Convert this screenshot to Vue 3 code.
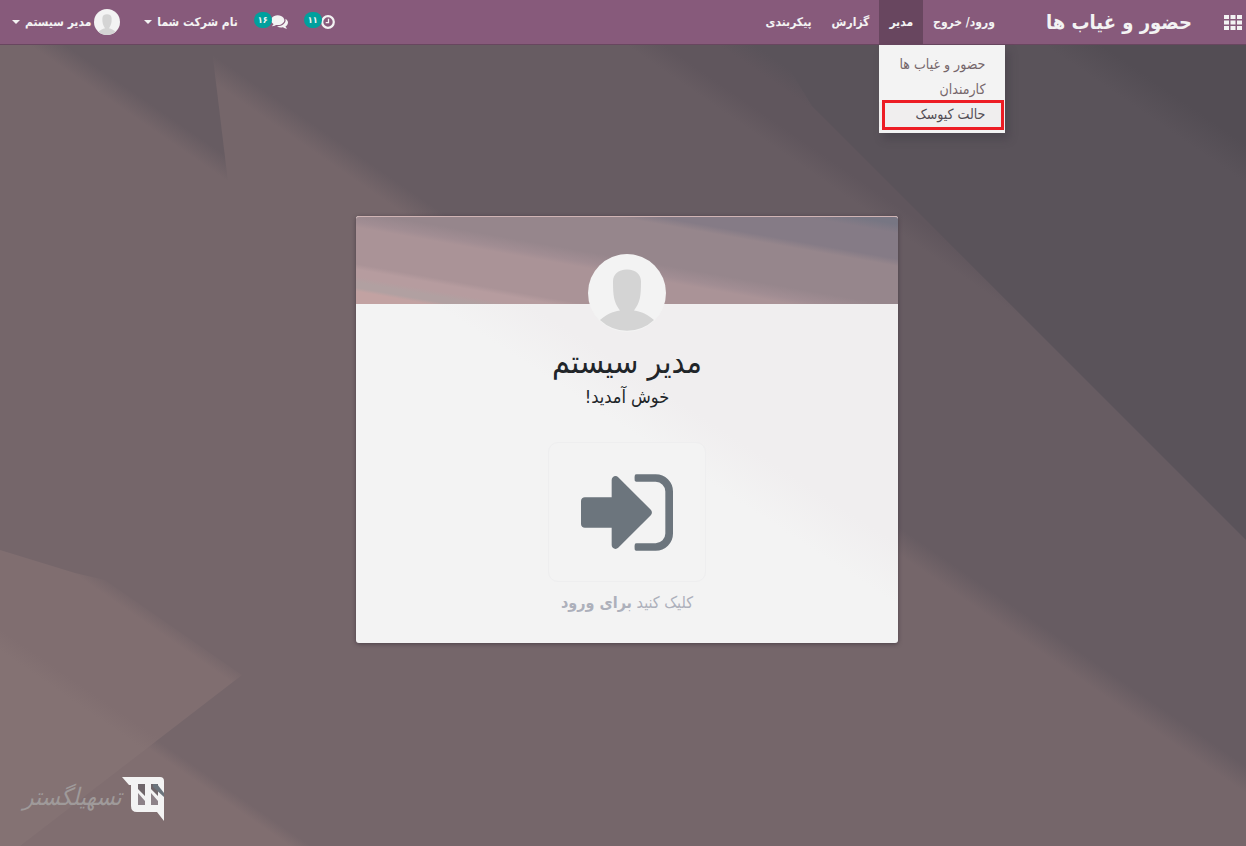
<script setup>
import { ref } from 'vue'

const menus = ref([
    { label: 'ورود/ خروج' },
    {
        label: 'مدیر',
        open: true,
        items: [
            { label: 'حضور و غیاب ها' },
            { label: 'کارمندان' },
            { label: 'حالت کیوسک', marked: true },
        ],
    },
    { label: 'گزارش' },
    { label: 'پیکربندی' },
])

const checkedIn = ref(false)

function toggleMenu(menu) {
    if (menu.items) menu.open = !menu.open
}
</script>

<template>
    <div class="page" dir="rtl" lang="fa">
        <!-- all facets share one gradient axis, only the stops differ -->
        <svg class="backdrop" viewBox="0 0 1246 846" preserveAspectRatio="none" aria-hidden="true">
            <defs>
                <linearGradient id="base" gradientUnits="userSpaceOnUse" x1="-340" y1="494" x2="340" y2="-494">
                    <stop offset="0.056" stop-color="#806e70" />
                    <stop offset="0.066" stop-color="#75666a" />
                    <stop offset="0.544" stop-color="#75666a" />
                    <stop offset="0.563" stop-color="#675c62" />
                    <stop offset="0.765" stop-color="#675c62" />
                    <stop offset="0.783" stop-color="#60565d" />
                    <stop offset="0.809" stop-color="#60565d" />
                    <stop offset="0.826" stop-color="#5a535a" />
                </linearGradient>
                <linearGradient id="left" gradientUnits="userSpaceOnUse" x1="-340" y1="494" x2="340" y2="-494">
                    <stop offset="0.483" stop-color="#75666a" />
                    <stop offset="0.5" stop-color="#675c62" />
                </linearGradient>
                <linearGradient id="right" gradientUnits="userSpaceOnUse" x1="-340" y1="494" x2="340" y2="-494">
                    <stop offset="0.963" stop-color="#5a535a" />
                    <stop offset="0.99" stop-color="#534d54" />
                </linearGradient>
                <linearGradient id="corner" gradientUnits="userSpaceOnUse" x1="-340" y1="494" x2="340" y2="-494">
                    <stop offset="0.053" stop-color="#847273" />
                    <stop offset="0.068" stop-color="#806e70" />
                    <stop offset="0.141" stop-color="#806e70" />
                    <stop offset="0.153" stop-color="#75666a" />
                </linearGradient>
            </defs>
            <rect width="1246" height="846" fill="url(#base)" />
            <path d="M0 0H206L228 182L0 400Z" fill="url(#left)" />
            <path d="M790 0H1246V540L812 106L790 70Z" fill="url(#right)" />
            <path d="M0 550L75 573L105 580L242 675L20 846H0Z" fill="url(#corner)" />
        </svg>

        <header class="navbar">
            <button class="apps" type="button" aria-label="برنامه ها">
                <svg width="18" height="15" viewBox="0 0 18 15" fill="currentColor">
                    <path d="M0 0h5v4H0zM6.500 0h5v4h-5zM13 0h5v4h-5zM0 5.500h5v4H0zM6.500 5.500h5v4h-5zM13 5.500h5v4h-5zM0 11h5v4H0zM6.500 11h5v4h-5zM13 11h5v4h-5z" />
                </svg>
            </button>
            <a class="brand" href="#">حضور و غیاب ها</a>

            <nav class="menus">
                <div v-for="menu in menus" :key="menu.label" class="menu">
                    <button class="menu-toggle" :class="{ open: menu.open }" type="button" @click="toggleMenu(menu)">{{ menu.label }}</button>
                    <div v-if="menu.open" class="dropdown">
                        <a v-for="item in menu.items" :key="item.label" href="#" class="dropdown-item"
                            :class="{ marked: item.marked }">{{ item.label }}</a>
                    </div>
                </div>
            </nav>

            <div class="systray">
                <button class="tray" type="button" aria-label="فعالیت ها">
                    <svg width="14" height="14" viewBox="0 0 14 14" fill="none" stroke="currentColor">
                        <circle cx="7" cy="7" r="5.800" stroke-width="2.200" />
                        <path d="M7.500 3.800V7.700H4.700" stroke-width="1.300" />
                    </svg>
                    <span class="badge">۱۱</span>
                </button>
                <button class="tray" type="button" aria-label="گفتگوها">
                    <svg width="17" height="14" viewBox="0 256 1792 1408" fill="currentColor">
                        <path d="M1408 768q0 139-94 257t-256.500 186.500-353.500 68.500q-86 0-176-16-124 88-278 128-36 9-86 16h-3q-11 0-20.500-8t-11.500-21q-1-3-1-6.500t.5-6.500 2-6l2.500-5 3.500-5.500 4-5 4.500-5 4-4.500q5-6 23-25t26-29.500 22.500-29 25-38.500 20.500-44q-124-72-195-177t-71-224q0-139 94-257t256.500-186.500 353.500-68.500 353.500 68.500 256.500 186.500 94 257zm384 256q0 120-71 224.500t-195 176.500q10 24 20.500 44t25 38.500 22.500 29 26 29.500 23 25q1 1 4 4.500t4.500 5 4 5 3.500 5.500l2.500 5 2 6 .5 6.500-1 6.500q-3 14-13 22t-22 7q-50-7-86-16-154-40-278-128-90 16-176 16-271 0-472-132 58 4 88 4 161 0 309-45t264-129q125-92 192-212t67-254q0-77-23-152 129 71 204 178t75 230z" />
                    </svg>
                    <span class="badge">۱۶</span>
                </button>
                <button class="company" type="button">نام شرکت شما <span class="caret"></span></button>
                <button class="user" type="button">
                    <svg class="user-avatar" viewBox="0 0 78 78">
                        <circle cx="39" cy="39" r="39" fill="#f3f3f3" />
                        <path d="M39 15.500c-9 0-14 4-14 14 0 13 2 20 8 28-7 2-13 4-20 10.500a39 39 0 0 0 52 0c-7-6.500-13-8.500-20-10.500 6-8 8-15 8-28 0-10-5-14-14-14z" fill="#d4d4d4" />
                    </svg>
                    مدیر سیستم <span class="caret"></span>
                </button>
            </div>
        </header>

        <main class="content">
            <section class="card">
                <div class="card-head">
                    <svg class="avatar" viewBox="0 0 78 78">
                        <circle cx="39" cy="39" r="39" fill="#f3f3f3" />
                        <path d="M39 15.500c-9 0-14 5-14 12 0 15 1 21 7 29-8 1-13 4-20 9.500a39 39 0 0 0 54 0c-7-5.500-12-8.500-20-9.500 6-8 7-14 7-29 0-7-5-12-14-12z" fill="#d4d4d4" />
                    </svg>
                </div>
                <div class="card-body">
                    <h1>مدیر سیستم</h1>
                    <p class="welcome">خوش آمدید!</p>
                    <button class="sign" type="button" aria-label="ورود" @click="checkedIn = !checkedIn">
                        <svg width="92" height="77" viewBox="0 256 1536 1280" fill="currentColor">
                            <path d="M1184 896q0 26-19 45l-544 544q-19 19-45 19t-45-19-19-45v-288h-448q-26 0-45-19t-19-45v-384q0-26 19-45t45-19h448v-288q0-26 19-45t45-19 45 19l544 544q19 19 19 45zm352-352v704q0 119-84.500 203.500t-203.500 84.500h-320q-13 0-22.500-9.500t-9.500-22.500q0-4-1-20t-.5-26.500 3-23.500 10-19.500 20.500-6.500h320q66 0 113-47t47-113v-704q0-66-47-113t-113-47h-312l-11.500-1-11.500-3-8-5.500-7-9-2-13.500q0-4-1-20t-.5-26.500 3-23.500 10-19.500 20.500-6.500h320q119 0 203.500 84.500t84.500 203.500z" />
                        </svg>
                    </button>
                    <p class="hint">کلیک کنید <b>برای ورود</b></p>
                </div>
            </section>
        </main>

        <footer class="logo">
            <svg width="43" height="44" viewBox="0 0 43 44">
                <path d="M0 0H38Q42 0 42 4V44L35 35H15Q9 35 9 29V8H7Z" fill="#f3f3f3" />
                <path d="M16 7h7v12l-7-7zM29 7h7v12l-7-7z" fill="#6f666a" />
                <path d="M16 16l7 8v4h-7zM29 16l7 8v4h-7z" fill="#8d8288" />
                <path d="M31 7h4l7 9v4l-11-10z" fill="#6c757d" />
            </svg>
            <span class="wordmark">تسهیلگستر</span>
        </footer>
    </div>
</template>

<style>
body {
    margin: 0;
    background: #75666a;
}
</style>

<style scoped>
.page {
    position: relative;
    display: flex;
    flex-direction: column;
    min-height: 100vh;
    font-family: "DejaVu Sans Condensed", "DejaVu Sans", sans-serif;
    font-size: 14px;
    color: #212529;
}

.backdrop {
    position: absolute;
    inset: 0;
    width: 100%;
    height: 100%;
    z-index: -1;
}

button {
    font: inherit;
    color: inherit;
    background: none;
    border: 0;
    padding: 0;
    margin: 0;
    cursor: pointer;
    white-space: nowrap;
}

a {
    color: inherit;
    text-decoration: none;
}

.navbar {
    display: flex;
    align-items: stretch;
    height: 44px;
    background: #875a7b;
    border-bottom: 1px solid #68465f;
    color: #f3f3f3;
}

.apps {
    display: flex;
    align-items: center;
    padding: 0 4px;
}

.brand {
    display: flex;
    align-items: center;
    margin: 0 28px 0 41px;
    font-size: 20px;
    font-weight: bold;
    white-space: nowrap;
}

.menus {
    display: flex;
    margin-left: auto;
}

.menu {
    position: relative;
    display: flex;
}

.menu-toggle {
    padding: 0 10px;
    font-size: 12px;
    font-weight: bold;
}

.menu-toggle.open {
    background: #68465f;
}

.dropdown {
    position: absolute;
    top: 45px;
    left: 0;
    z-index: 2;
    width: 126px;
    padding: 7px 0 6px;
    background: #f3f3f3;
    box-shadow: 4px 6px 8px rgba(60, 54, 64, 0.4);
    color: #75666a;
}

.dropdown-item {
    position: relative;
    display: block;
    padding: 0 20px 1px;
    line-height: 24px;
    white-space: nowrap;
}

.dropdown-item.marked {
    background: #f0eeee;
    color: #534d54;
}

.dropdown-item.marked::after {
    content: '';
    position: absolute;
    inset: -2px 1px -3px 3px;
    border: 3px solid #ed1c24;
}

.systray {
    display: flex;
    align-items: center;
    font-size: 12px;
    font-weight: bold;
}

.tray {
    display: flex;
    align-items: center;
    margin-left: 16px;
}

.badge {
    min-width: 16px;
    margin: 0 -1px 4px 0;
    padding: 0 4px;
    box-sizing: border-box;
    border-radius: 8px;
    background: #00a09d;
    font-size: 9px;
    line-height: 16px;
    text-align: center;
}

.company,
.user {
    display: flex;
    align-items: center;
}

.company {
    margin-left: 24px;
}

.user {
    padding-left: 12px;
}

.user-avatar {
    width: 26px;
    height: 26px;
    margin-left: 3px;
}

.caret {
    margin-right: 5px;
    border: 4px solid transparent;
    border-top-color: currentColor;
    border-bottom: 0;
}

.content {
    display: flex;
    justify-content: center;
    padding: 171px 0 0 8px;
}

.card {
    width: 542px;
    border-radius: 3px;
    box-shadow: 0 1px 4px rgba(60, 50, 60, 0.7);
    background: linear-gradient(33deg, #f3f3f3 50%, #f0eeef 58%);
}

.card-head {
    display: flex;
    justify-content: center;
    box-sizing: border-box;
    height: 88px;
    padding-top: 37px;
    border-top: 1px solid #d0b4b4;
    border-radius: 3px 3px 0 0;
    background: linear-gradient(10deg, #c2a2a2 7%, #b1a0a1 9%, #b1a0a1 12%, #b69c9f 15%, #b69c9f 19%, #aa9397 22%, #aa9397 42%, #a18d93 45%, #96868c 51%, #96868c 73%, #857b86 77%, #857b86 91%, #777683 96%);
}

.avatar {
    flex: none;
    width: 78px;
    height: 78px;
}

.card-body {
    display: flex;
    flex-direction: column;
    align-items: center;
    padding: 36px 0 28px;
}

h1 {
    margin: 0;
    font-size: 32px;
    font-weight: normal;
    line-height: 44px;
}

.welcome {
    margin: 0 0 32px;
    font-size: 18px;
    line-height: 26px;
}

.sign {
    display: flex;
    align-items: center;
    justify-content: center;
    box-sizing: border-box;
    width: 158px;
    height: 140px;
    border: 1px solid #eeeeef;
    border-radius: 10px;
    background: #f3f3f3;
    color: #6c757d;
}

.hint {
    margin: 8px 0 0;
    font-size: 16px;
    line-height: 25px;
    color: #adb0bb;
}

.logo {
    display: flex;
    align-items: flex-start;
    justify-content: flex-end;
    margin-top: auto;
    padding: 0 0 25px 23px;
}

.wordmark {
    font-size: 24px;
    font-style: italic;
    line-height: 40px;
    color: #9f9a9a;
}
</style>
